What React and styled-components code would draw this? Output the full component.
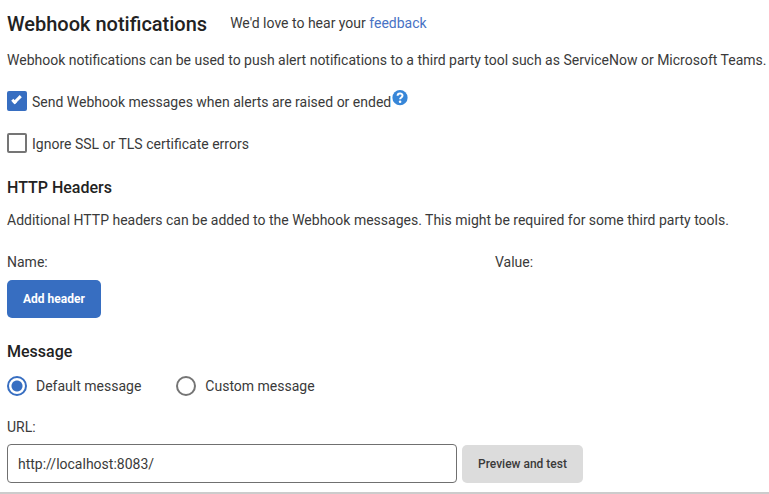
import React, { useState } from "react";
import styled, { createGlobalStyle } from "styled-components";

const GlobalStyle = createGlobalStyle`
  * { box-sizing: border-box; }
  body { margin: 0; background: #fff; color: #3a3a3a; font: 400 14px/20px Roboto, sans-serif; }
`;

const Page = styled.main`
  padding: 10px 0 9px 7px;
  border-bottom: 2px solid #ccc;
`;

const TitleRow = styled.header`
  display: flex;
  align-items: flex-start;
  gap: 23px;
`;

const Title = styled.h1`
  margin: 0;
  font-size: 20px;
  line-height: 28px;
  font-weight: 500;
  color: #222;
`;

const Feedback = styled.span`
  padding-top: 3px;
`;

const Link = styled.a`
  color: #4872c4;
  text-decoration: none;
`;

const Text = styled.p`
  margin: 0;
  padding-top: ${(p) => p.$top}px;
`;

const Heading = styled.h2`
  margin: 0;
  padding-top: ${(p) => p.$top}px;
  font-size: 16px;
  line-height: 24px;
  font-weight: 500;
  color: #222;
`;

const CheckGroup = styled.div`
  display: flex;
  flex-direction: column;
  gap: 20px;
  padding-top: 21px;
`;

const CheckRow = styled.div`
  display: flex;
  align-items: flex-start;
`;

const CheckLabel = styled.label`
  display: flex;
  align-items: flex-start;
  gap: 5px;
  line-height: 22px;
`;

const Checkbox = styled.input`
  appearance: none;
  width: 20px;
  height: 20px;
  margin: 0;
  border: 2px solid #757575;
  border-radius: 2px;
  display: grid;
  place-items: center;
  &:checked { background: #376ec1; border-color: #376ec1; }
  &:checked::after {
    content: "";
    width: 2px;
    height: 7px;
    margin: 0 2px 4px 0;
    border: solid #fff;
    border-width: 0 3px 3px 0;
    transform: rotate(45deg);
  }
`;

const HelpButton = styled.button`
  display: flex;
  margin: -1px 0 0 1px;
  padding: 0;
  border: 0;
  background: none;
`;

const HeaderColumns = styled.div`
  display: grid;
  grid-template-columns: 488fr 274fr;
  padding-top: 22px;
`;

const Button = styled.button`
  height: 38px;
  padding: 0 16px;
  border: 0;
  border-radius: 5px;
  font: ${(p) => (p.$primary ? 700 : 500)} 12px/16px Roboto, sans-serif;
  white-space: nowrap;
  color: ${(p) => (p.$primary ? "#fff" : "#3a3a3a")};
  background: ${(p) => (p.$primary ? "#376ec1" : "#dcdcdc")};
`;

const ButtonRow = styled.div`
  display: flex;
  padding-top: 8px;
`;

const RadioRow = styled.div`
  display: flex;
  gap: 35px;
  padding-top: 12px;
`;

const RadioLabel = styled.label`
  display: flex;
  align-items: center;
  gap: 9px;
`;

const Radio = styled.input`
  appearance: none;
  width: 20px;
  height: 20px;
  margin: 0;
  border: 2px solid #757575;
  border-radius: 50%;
  &:checked {
    border-color: #376ec1;
    background: radial-gradient(circle, #376ec1 5px, #fff 6px);
  }
`;

const UrlLabel = styled.label`
  display: block;
  padding-top: 21px;
`;

const UrlRow = styled.div`
  display: grid;
  grid-template-columns: minmax(0, 450px) auto;
  justify-content: start;
  align-items: end;
  gap: 5px;
  padding-top: 7px;
`;

const UrlInput = styled.input`
  width: 100%;
  height: 39px;
  padding: 0 10px;
  border: 1px solid #707070;
  border-radius: 4px;
  color: #3a3a3a;
  font: 400 14px/20px Roboto, sans-serif;
`;

function HelpIcon() {
  return (
    <svg width="16" height="16" viewBox="0 0 16 16" aria-hidden="true">
      <circle cx="8" cy="7.7" r="7.6" fill="#3786d8" />
      <path d="M5.6 5.8c0-3.2 4.9-3.1 4.9-.2 0 1.9-2.4 1.8-2.4 3.6" fill="none" stroke="#fff" strokeWidth="2" />
      <circle cx="8.1" cy="11.7" r="1.3" fill="#fff" />
    </svg>
  );
}

export default function App() {
  const [send, setSend] = useState(true);
  const [ignore, setIgnore] = useState(false);
  const [message, setMessage] = useState("default");
  const [url, setUrl] = useState("http://localhost:8083/");
  return (
    <>
      <GlobalStyle />
      <Page>
        <TitleRow>
          <Title>Webhook notifications</Title>
          <Feedback>We'd love to hear your <Link href="#feedback">feedback</Link></Feedback>
        </TitleRow>
        <Text $top={12}>Webhook notifications can be used to push alert notifications to a third party tool such as ServiceNow or Microsoft Teams.</Text>
        <CheckGroup>
          <CheckRow>
            <CheckLabel>
              <Checkbox type="checkbox" checked={send} onChange={(e) => setSend(e.target.checked)} />
              Send Webhook messages when alerts are raised or ended
            </CheckLabel>
            <HelpButton type="button" aria-label="Help"><HelpIcon /></HelpButton>
          </CheckRow>
          <CheckRow>
            <CheckLabel>
              <Checkbox type="checkbox" checked={ignore} onChange={(e) => setIgnore(e.target.checked)} />
              Ignore SSL or TLS certificate errors
            </CheckLabel>
          </CheckRow>
        </CheckGroup>
        <Heading $top={21}>HTTP Headers</Heading>
        <Text $top={10}>Additional HTTP headers can be added to the Webhook messages. This might be required for some third party tools.</Text>
        <HeaderColumns>
          <span>Name:</span>
          <span>Value:</span>
        </HeaderColumns>
        <ButtonRow>
          <Button type="button" $primary>Add header</Button>
        </ButtonRow>
        <Heading $top={22}>Message</Heading>
        <RadioRow>
          <RadioLabel>
            <Radio type="radio" name="message" checked={message === "default"} onChange={() => setMessage("default")} />
            Default message
          </RadioLabel>
          <RadioLabel>
            <Radio type="radio" name="message" checked={message === "custom"} onChange={() => setMessage("custom")} />
            Custom message
          </RadioLabel>
        </RadioRow>
        <UrlLabel htmlFor="url">URL:</UrlLabel>
        <UrlRow>
          <UrlInput id="url" type="text" value={url} onChange={(e) => setUrl(e.target.value)} />
          <Button type="button">Preview and test</Button>
        </UrlRow>
      </Page>
    </>
  );
}
